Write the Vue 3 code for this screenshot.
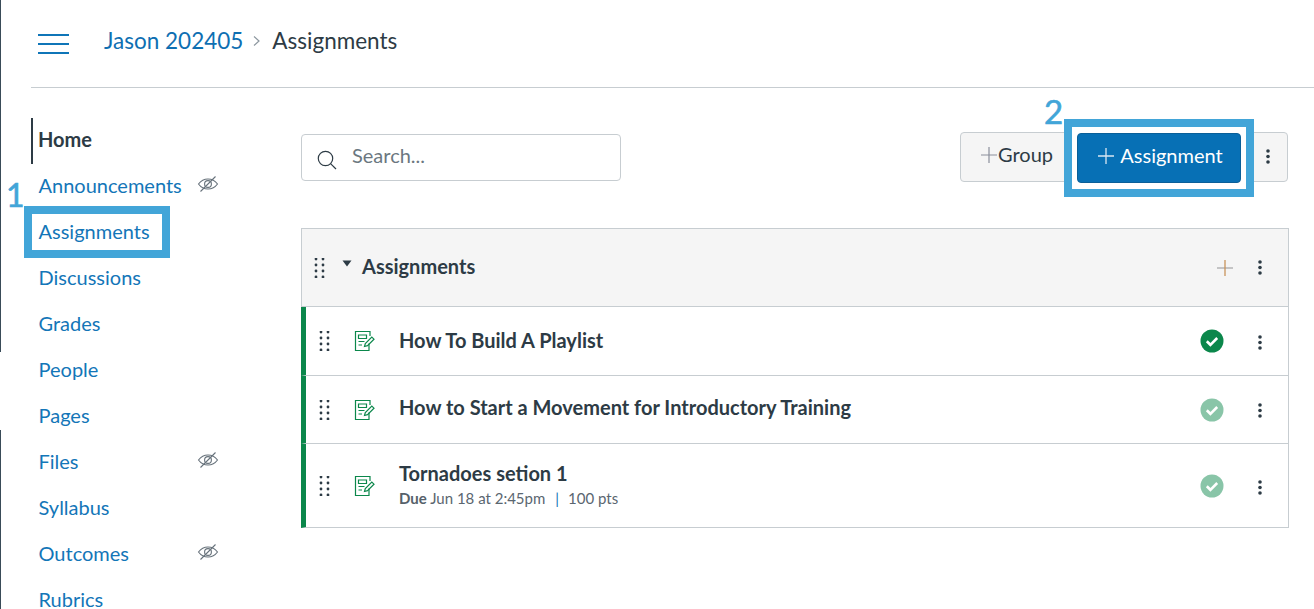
<script setup>
const navItems = [
  { label: 'Home', active: true },
  { label: 'Announcements', hidden: true },
  { label: 'Assignments', marked: true, badge: '1' },
  { label: 'Discussions' },
  { label: 'Grades' },
  { label: 'People' },
  { label: 'Pages' },
  { label: 'Files', hidden: true },
  { label: 'Syllabus' },
  { label: 'Outcomes', hidden: true },
  { label: 'Rubrics' }
]
const rows = [
  { title: 'How To Build A Playlist', cls: 'row-a', faded: false },
  { title: 'How to Start a Movement for Introductory Training', cls: 'row-b', faded: true },
  { title: 'Tornadoes setion 1', cls: 'row-c', faded: true, due: 'Jun 18 at 2:45pm', pts: '100 pts' }
]
const dots = [3, 8.5, 14]
</script>

<template>
  <div class="page">
    <i class="edge edge-top"></i>
    <i class="edge edge-bottom"></i>
    <header class="topbar">
      <button class="burger" aria-label="Menu"><span></span><span></span><span></span></button>
      <nav class="crumbs">
        <a class="crumb-link">Jason 202405</a>
        <svg class="crumb-sep" width="10" height="14" viewBox="0 0 10 14"><path d="M2 2.5 7 7l-5 4.5" fill="none" stroke="#8b969e" stroke-width="1.2"/></svg>
        <span class="crumb-current">Assignments</span>
      </nav>
    </header>

    <div class="body">
      <aside class="sidenav">
        <div v-for="item in navItems" :key="item.label" class="nav-item" :class="{ active: item.active }">
          <span class="nav-label">{{ item.label }}</span>
          <svg v-if="item.hidden" class="eye" width="22" height="20" viewBox="0 0 22 20" fill="none" stroke="#66717a" stroke-width="1.1">
            <path d="M1.5 10C4 6.6 7.2 5 11 5s7 1.6 9.500 5C18 13.400 14.800 15 11 15s-7-1.600-9.500-5Z"/>
            <circle cx="11" cy="10" r="3.400"/>
            <path d="M3.500 17.500 18.500 2.500"/>
          </svg>
          <template v-if="item.marked">
            <span class="mark-box"></span>
            <span class="mark-num">{{ item.badge }}</span>
          </template>
        </div>
      </aside>

      <main class="content">
        <div class="toolbar">
          <label class="search">
            <svg width="22" height="22" viewBox="0 0 22 22" fill="none" stroke="#2d3b45" stroke-width="1.200">
              <circle cx="9.500" cy="9.500" r="7.200"/>
              <path d="M14.800 14.800 20 20"/>
            </svg>
            <span>Search...</span>
          </label>
          <div class="actions">
            <button class="btn btn-group">
              <svg width="18" height="18" viewBox="0 0 18 18"><path d="M9 1v16M1 9h16" stroke="#8b8f9c" stroke-width="1.200"/></svg>
              Group
            </button>
            <div class="btn-wrap">
              <span class="mark-num two">2</span>
              <button class="btn btn-primary">
                <svg width="18" height="18" viewBox="0 0 18 18"><path d="M9 1v16M1 9h16" stroke="#d9e6f2" stroke-width="1.300"/></svg>
                Assignment
              </button>
            </div>
            <button class="btn btn-more" aria-label="More">
              <svg width="4" height="18" viewBox="0 0 4 18"><circle v-for="y in dots" :key="y" cx="2" :cy="y" r="1.800" fill="#2d3b45"/></svg>
            </button>
          </div>
        </div>

        <section class="group">
          <div class="group-head">
            <svg class="grip" width="12" height="20" viewBox="0 0 12 20"><g fill="#2d3b45"><circle v-for="y in [2,8,14,20]" :key="'a'+y" cx="2" :cy="y-1" r="1.400"/><circle v-for="y in [2,8,14,20]" :key="'b'+y" cx="9" :cy="y-1" r="1.400"/></g></svg>
            <svg class="caret" width="10" height="7" viewBox="0 0 10 7"><path d="M0.500 0.500h9L5 6.500Z" fill="#2d3b45"/></svg>
            <span class="group-title">Assignments</span>
            <svg class="add" width="16" height="16" viewBox="0 0 16 16"><path d="M0 8h16" stroke="#a9a9ab" stroke-width="1.300"/><path d="M8 0v16" stroke="#c8935a" stroke-width="1.300"/></svg>
            <svg class="kebab" width="4" height="18" viewBox="0 0 4 18"><circle v-for="y in dots" :key="y" cx="2" :cy="y" r="1.800" fill="#2d3b45"/></svg>
          </div>
          <div v-for="row in rows" :key="row.title" class="row" :class="row.cls">
            <svg class="grip" width="12" height="20" viewBox="0 0 12 20"><g fill="#2d3b45"><circle v-for="y in [2,8,14,20]" :key="'a'+y" cx="2" :cy="y-1" r="1.400"/><circle v-for="y in [2,8,14,20]" :key="'b'+y" cx="9" :cy="y-1" r="1.400"/></g></svg>
            <svg class="doc" width="22" height="22" viewBox="0 0 22 22" fill="none" stroke="#0b874b" stroke-width="1.200">
              <path d="M15 13.500V20.500H1.500V1.500H16V6"/>
              <path d="M4.500 5h8v3.500h-8z"/>
              <path d="M4.500 11.500h6M4.500 15h3.500"/>
              <path d="M10.500 16.500l.8-3 6.500-6.500 2.200 2.200-6.500 6.500z" stroke="#0b874b"/>
            </svg>
            <div class="row-text">
              <div class="row-title">{{ row.title }}</div>
              <div v-if="row.due" class="row-meta"><b>Due</b> Jun 18 at 2:45pm<span class="pipe">|</span>{{ row.pts }}</div>
            </div>
            <svg class="status" :class="{ faded: row.faded }" width="24" height="24" viewBox="0 0 24 24">
              <circle cx="12" cy="12" r="11.500" fill="#0b874b"/>
              <path d="M6.800 12.300 10.400 15.800 17.200 9" fill="none" stroke="#fff" stroke-width="2.600"/>
            </svg>
            <svg class="kebab" width="4" height="18" viewBox="0 0 4 18"><circle v-for="y in dots" :key="y" cx="2" :cy="y" r="1.800" fill="#2d3b45"/></svg>
          </div>
        </section>
      </main>
    </div>
  </div>
</template>

<style scoped>
.page {
  position: relative;
  width: 1314px;
  height: 609px;
  overflow: hidden;
  background: #fff;
  font-family: Lato, "Noto Sans", sans-serif;
  color: #2d3b45;
}
.edge { position: absolute; left: 0; width: 1px; background: #394b58; }
.edge-top { top: 0; height: 352px; }
.edge-bottom { top: 430px; height: 179px; }
.topbar {
  margin-left: 31px;
  height: 88px;
  border-bottom: 1px solid #c7cdd1;
  display: flex;
  align-items: center;
  padding-left: 7px;
  padding-bottom: 7px;
  box-sizing: border-box;
}
.burger {
  width: 31px;
  height: 20px;
  padding: 0;
  border: 0;
  background: none;
  display: flex;
  flex-direction: column;
  justify-content: space-between;
  margin-top: 7px;
}
.burger span { display: block; height: 2px; background: #0f75b8; }
.crumbs { display: flex; align-items: center; margin-left: 35px; font-size: 22.5px; }
.crumb-link { color: #0e6fb2; }
.crumb-sep { margin: 2px 10px 0 9px; }
.crumb-current { color: #2d3b45; }
.body { display: flex; }
.sidenav { width: 301px; flex: none; padding: 30px 0 0 31px; box-sizing: border-box; }
.nav-item {
  position: relative;
  height: 46px;
  display: flex;
  align-items: center;
  padding-left: 7.5px;
  padding-bottom: 4px;
  box-sizing: border-box;
  font-size: 20px;
  color: #1376b8;
}
.nav-item.active { color: #2d3b45; font-weight: 700; border-left: 2px solid #2d3b45; padding-left: 5px; }
.eye { position: absolute; left: 166px; top: 10px; }
.mark-box {
  position: absolute;
  left: -7px;
  top: -4px;
  width: 146px;
  height: 52px;
  border: 8px solid #42a5d8;
  box-sizing: border-box;
}
.mark-num {
  position: absolute;
  left: -25px;
  top: -35px;
  font-size: 32px;
  line-height: 40px;
  color: #42a5d8;
  -webkit-text-stroke: 0.6px #42a5d8;
}
.mark-num.two { left: -28px; top: -36px; z-index: 2; font-size: 33px; }
.content { width: 988px; flex: none; padding-top: 44px; }
.toolbar { display: flex; justify-content: space-between; align-items: center; height: 50px; }
.search {
  width: 320px;
  height: 47px;
  margin-top: 1px;
  border: 1px solid #c7cdd1;
  border-radius: 4px;
  box-sizing: border-box;
  display: flex;
  align-items: center;
  gap: 14px;
  padding: 0 0 5px 14px;
  font-size: 20px;
  color: #6b7780;
}
.search svg { margin-top: 9px; }
.actions { display: flex; align-items: center; margin-right: 1px; }
.btn {
  height: 50px;
  border-radius: 4px;
  box-sizing: border-box;
  display: flex;
  align-items: center;
  justify-content: center;
  font-family: inherit;
  font-size: 20px;
  padding: 0 0 6px;
}
.btn svg { margin-top: 2px; }
.btn-group {
  width: 108px;
  margin-right: 9px;
  background: #f5f5f5;
  border: 1px solid #c7cdd1;
  color: #2d3b45;
  justify-content: flex-start;
  padding-left: 19px;
  gap: 0;
}
.btn-wrap {
  position: relative;
  padding: 6px 5px;
  border: 8px solid #42a5d8;
  background: #fff;
  margin: -14px 0 -15px -13px;
  z-index: 1;
}
.btn-wrap .btn { width: 164px; padding-left: 2px; }
.btn-primary {
  background: #0770b5;
  border: 1px solid #0a5f98;
  color: #fff;
  gap: 5px;
}
.btn-more {
  width: 38px;
  margin-left: -4px;
  padding: 0 2px 0 0;
  background: #f5f5f5;
  border: 1px solid #c7cdd1;
}
.btn-more svg { margin-top: 0; }
.group { margin-top: 46px; border-top: 1px solid #c7cdd1; border-right: 1px solid #c7cdd1; }
.group-head {
  height: 78px;
  box-sizing: border-box;
  background: #f5f5f5;
  border-left: 1px solid #c7cdd1;
  border-bottom: 1px solid #c7cdd1;
  display: flex;
  align-items: center;
  padding-left: 12px;
}
.group-title { font-weight: 700; font-size: 20px; margin-left: 10px; margin-bottom: 4px; }
.caret { margin-left: 16px; margin-top: -8px; }
.add { margin-left: auto; margin-right: 25px; }
.group-head .kebab { margin-right: 26px; }
.row {
  display: flex;
  align-items: center;
  box-sizing: border-box;
  border-left: 5px solid #0b874b;
  border-bottom: 1px solid #c7cdd1;
  padding-left: 13px;
}
.row-a { height: 69px; }
.row-b { height: 68px; }
.row-c { height: 84px; }
.doc { margin-left: 23px; }
.row-text { margin-left: 23px; flex: 1; }
.row-a .row-text { margin-bottom: 3px; }
.row-b .row-text { margin-bottom: 5px; }
.row-c .row-text { margin-bottom: 4px; }
.row-title { font-weight: 700; font-size: 20px; line-height: 26px; }
.row-meta { font-size: 15px; line-height: 20px; margin-top: 2px; color: #5a6670; }
.row-meta b { color: #56616a; }
.pipe { margin: 0 9px 0 10px; color: #1376b8; }
.status { margin-right: 34px; }
.status.faded { opacity: 0.48; }
.row .kebab { margin-right: 26px; margin-top: 4px; }
.row-b .kebab { margin-top: 2px; }
</style>
